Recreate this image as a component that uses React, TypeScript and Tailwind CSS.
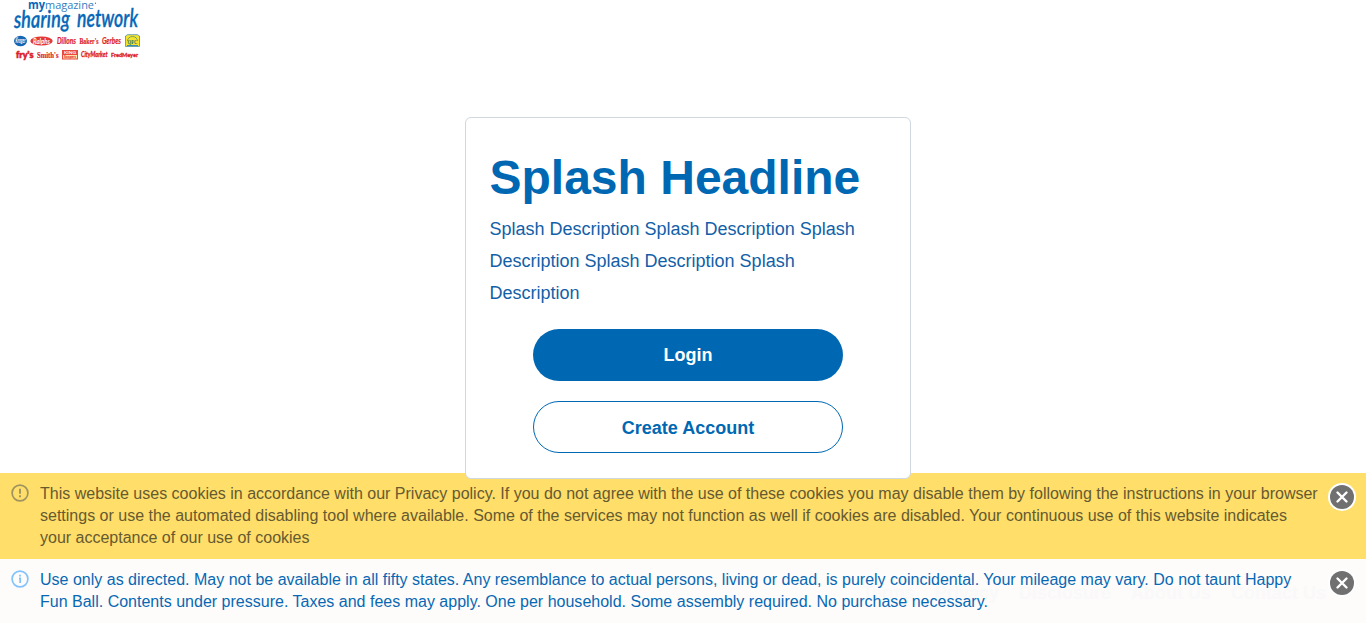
import React from 'react';

const blue = '#0868b8';
const red = '#dc1f2d';

function Logo() {
  return (
    <svg className="block h-[62px] w-[144px]" viewBox="0 0 144 62" role="img" aria-label="mymagazine sharing network">
      <g fill={blue} fontFamily="'Open Sans', sans-serif">
        <text x="28" y="9" fontSize="11.5" fontWeight="700" textLength="17" lengthAdjust="spacingAndGlyphs">my</text>
        <text x="45" y="9" fontSize="11.5" fontWeight="400" textLength="49" lengthAdjust="spacingAndGlyphs" opacity=".85">magazine</text>
        <circle cx="95.5" cy="3.2" r=".6" />
      </g>
      <g fill={blue} stroke={blue} strokeWidth=".3" strokeLinejoin="round" fontFamily="Lato, sans-serif" fontStyle="italic" fontWeight="600" fontSize="24">
        <text x="14" y="28" textLength="56" lengthAdjust="spacingAndGlyphs" transform="rotate(-1 14 28)">sharing</text>
        <text x="77" y="27" textLength="61" lengthAdjust="spacingAndGlyphs">network</text>
      </g>
      <ellipse cx="20.5" cy="41" rx="6.5" ry="5.2" fill="#1467b3" />
      <text x="15.5" y="43" fontSize="6.5" fontWeight="700" fontStyle="italic" fill="#fff" fontFamily="Lato, sans-serif" textLength="10" lengthAdjust="spacingAndGlyphs">Kroger</text>
      <ellipse cx="41.5" cy="41" rx="11.2" ry="4.6" fill="#e33a35" />
      <text x="33" y="43.6" fontSize="7.5" fontWeight="700" fontStyle="italic" fill="#fff" fontFamily="Lato, sans-serif" textLength="17" lengthAdjust="spacingAndGlyphs">Ralphs</text>
      <g fill={red} fontWeight="700">
        <text x="57" y="44" fontSize="9" fontStyle="italic" stroke={red} strokeWidth=".2" fontFamily="Lato, sans-serif" textLength="19" lengthAdjust="spacingAndGlyphs">Dillons</text>
        <text x="79.5" y="44" fontSize="8" stroke={red} strokeWidth=".2" fontFamily="'Liberation Serif', serif" textLength="19" lengthAdjust="spacingAndGlyphs">Baker's</text>
        <text x="102" y="44" fontSize="9" fontStyle="italic" stroke={red} strokeWidth=".2" fontFamily="Lato, sans-serif" textLength="19" lengthAdjust="spacingAndGlyphs">Gerbes</text>
      </g>
      <path d="M125.5 46.5V36l2-1.3h10l2 1.3v10.5z" fill="#f5e32c" stroke="#4b8eac" strokeWidth=".8" />
      <path d="M127.5 41a5 4.5 0 0 1 10 0" fill="none" stroke="#72a26c" strokeWidth="1" />
      <text x="127.5" y="44" fontSize="7" fontWeight="700" fill="#276a70" fontFamily="'Liberation Serif', serif" textLength="10" lengthAdjust="spacingAndGlyphs">QFC</text>
      <path d="M127 45.5h11" stroke="#358db8" strokeWidth="1" />
      <g fill={red}>
        <text x="16" y="57.5" fontSize="9" fontWeight="900" stroke={red} strokeWidth=".6" fontFamily="Lato, sans-serif" textLength="17.5" lengthAdjust="spacingAndGlyphs">fry's</text>
        <text x="37" y="58" fontSize="9" fontWeight="700" stroke={red} strokeWidth=".2" fontFamily="'Liberation Serif', serif" textLength="21.5" lengthAdjust="spacingAndGlyphs">Smith's</text>
        <rect x="62" y="50" width="16" height="9.5" fill="#e8483f" />
        <path d="M63 55h14v3.5H63z" fill="#ffe0a5" />
        <text x="64" y="54" fontSize="4.5" fontWeight="700" fill="#fff" fontFamily="Lato, sans-serif" textLength="12" lengthAdjust="spacingAndGlyphs">KING</text>
        <text x="64" y="58.2" fontSize="4" fontWeight="700" fontFamily="Lato, sans-serif" textLength="12" lengthAdjust="spacingAndGlyphs">Soopers</text>
        <text x="81" y="57.3" fontSize="8" fontWeight="900" fontStyle="italic" stroke={red} strokeWidth=".3" fontFamily="Lato, sans-serif" textLength="26.5" lengthAdjust="spacingAndGlyphs">CityMarket</text>
        <text x="111" y="57" fontSize="6" fontWeight="900" stroke={red} strokeWidth=".3" fontFamily="Lato, sans-serif" textLength="27" lengthAdjust="spacingAndGlyphs">FredMeyer</text>
      </g>
    </svg>
  );
}

function StatusIcon({ kind }: { kind: 'warning' | 'info' }) {
  return (
    <svg className="mt-[11px] size-[18px] shrink-0" viewBox="0 0 18 18" fill="none" stroke={kind === 'warning' ? '#a1935f' : '#83c3fb'}>
      <circle cx="9" cy="9" r="7.9" strokeWidth="1.7" />
      {kind === 'warning' ? (
        <path d="M9 4.7v5M9 11.3v2" strokeWidth="1.9" />
      ) : (
        <path d="M9 4.8v1.8M8 8.5h1.2v4.6" strokeWidth="1.8" />
      )}
    </svg>
  );
}

function CloseButton({ ringed = false }: { ringed?: boolean }) {
  return (
    <button aria-label="Close" className="mt-[10px] size-7 shrink-0">
      <svg viewBox="0 0 28 28" className="size-7">
        <circle cx="14" cy="14" r="14" fill="#fff" opacity={ringed ? 1 : 0.7} />
        <circle cx="14" cy="14" r="12" fill="#707070" />
        <path d="m9.5 9.5 9 9m0-9-9 9" stroke="#fff" strokeWidth="2.4" strokeLinecap="round" />
      </svg>
    </button>
  );
}

export default function App() {
  return (
    <div className="flex h-[623px] flex-col overflow-hidden bg-white font-['Liberation_Sans',Arial,sans-serif]">
      <header className="h-[117px] shrink-0">
        <Logo />
      </header>
      <main className="relative z-10 ml-[465px] h-[362px] w-[446px] shrink-0 rounded-md border border-[#d0d7df] bg-white px-[23.5px] pt-[30px] text-[#0068b3]">
        <h1 className="text-5xl leading-[60px] font-bold whitespace-nowrap">Splash Headline</h1>
        <p className="mt-[5px] text-lg leading-8 text-[#1260a8]">
          Splash Description Splash Description Splash Description Splash Description Splash Description
        </p>
        <div className="mt-5 flex flex-col items-center gap-5 text-lg font-bold">
          <button className="h-[52px] w-[310px] rounded-full bg-[#0068b3] text-white">Login</button>
          <button className="h-[52px] w-[310px] rounded-full border border-[#0068b3] pt-[2px]">Create Account</button>
        </div>
      </main>
      <section className="-mt-[6px] flex h-[86px] shrink-0 bg-[#ffde69] pl-[11px] text-base leading-[22px] text-[#665a31]">
        <StatusIcon kind="warning" />
        <p className="ml-[11px] w-[1288px] shrink-0 pt-[10px] leading-[22px]">
          This website uses cookies in accordance with our Privacy policy. If you do not agree with the use of these cookies you may disable them by following the instructions in your browser<br />
          settings or use the automated disabling tool where available. Some of the services may not function as well if cookies are disabled. Your continuous use of this website indicates<br />
          your acceptance of our use of cookies
        </p>
        <CloseButton ringed />
      </section>
      <section className="relative flex h-16 shrink-0 bg-[#fdfcfb] pl-[11px] text-base leading-[22px] text-[#0868b3]">
        <nav className="absolute top-[24px] right-[40px] flex gap-5 text-lg leading-5 font-bold text-[#f9f9f9]">
          <a>Terms</a><a>Privacy</a><a>Disclosure</a><a>About Us</a><a>Contact Us</a>
        </nav>
        <StatusIcon kind="info" />
        <p className="relative ml-[11px] w-[1288px] shrink-0 pt-[10px] leading-[22px] tracking-[0.006px]">
          Use only as directed. May not be available in all fifty states. Any resemblance to actual persons, living or dead, is purely coincidental. Your mileage may vary. Do not taunt Happy<br />
          Fun Ball. Contents under pressure. Taxes and fees may apply. One per household. Some assembly required. No purchase necessary.
        </p>
        <CloseButton />
      </section>
    </div>
  );
}
